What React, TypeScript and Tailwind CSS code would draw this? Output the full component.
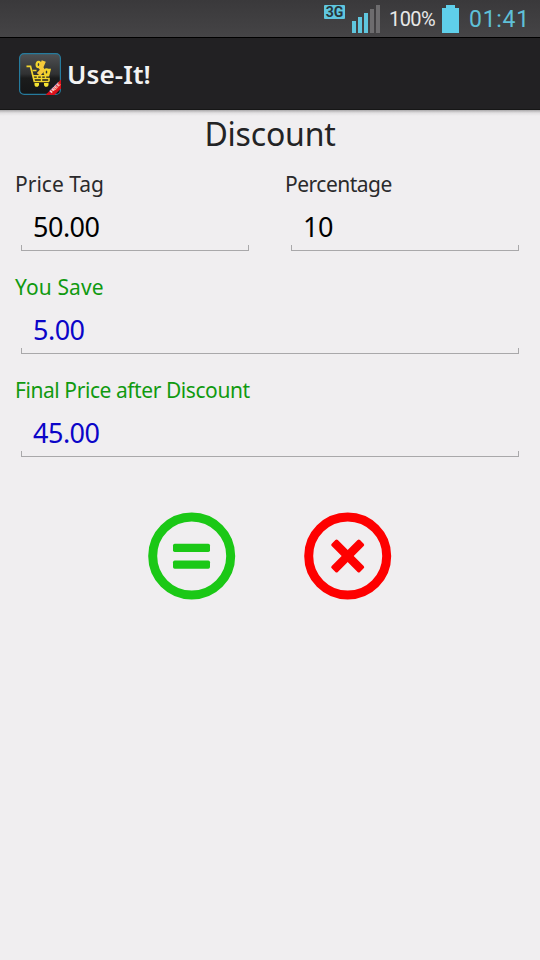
import React from "react";

type FieldProps = {
  label: string;
  value: string;
  labelClass?: string;
  valueClass?: string;
};

function Field({ label, value, labelClass = "", valueClass = "text-black" }: FieldProps) {
  return (
    <label className="flex h-[103px] w-full flex-col pl-[15px] pr-[21px]">
      <span className={`h-[37px] whitespace-pre text-[21px] leading-[28px] ${labelClass}`}>{label}</span>
      <span className={`ml-[6px] mt-[2px] block h-[42px] pl-[12px] text-[27px] leading-[36px] tracking-[-0.5px] ${valueClass}`}>
        {value}
      </span>
      <span className="-mt-[6px] ml-[6px] block h-[6px] border-x border-b border-[#a9a8aa]" />
    </label>
  );
}

function StatusBar() {
  return (
    <div className="flex h-[38px] items-start border-b border-black bg-linear-to-b from-[#3a393b] to-[#454446]">
      <svg className="ml-[324px] mt-[5px] h-[14px] w-[21px]" viewBox="0 0 21 14">
        <rect width="21" height="14" rx="1" fill="#5fc6de" />
        <text x="10.500" y="12" textAnchor="middle" fontFamily="Roboto, sans-serif" fontWeight="700" fontSize="14" fill="#27363b">3G</text>
      </svg>
      <svg className="ml-[7px] mt-[5px] h-[28px] w-[28px]" viewBox="0 0 28 28">
        <path d="M0 16h4v12H0zM6 12h4v16H6zM12 8h4v20h-4z" fill="#5fc6de" />
        <path d="M18 4h4v24h-4zM24 0h4v28h-4z" fill="#6d6c6e" />
      </svg>
      <span className="ml-[9px] mt-[6px] w-[53px] font-[Roboto,sans-serif] text-[20px] leading-[27px] tracking-[-0.6px] text-[#e8e8e8]">100%</span>
      <svg className="mt-[5px] h-[28px] w-[17px]" viewBox="0 0 17 28">
        <path d="M4 0h9v3h4v25H0V3h4z" fill="#5fcfea" />
      </svg>
      <span className="ml-[10px] mt-[5px] font-[Roboto,sans-serif] text-[23px] leading-[30px] tracking-[0.7px] text-[#5fc0d8]">01:41</span>
    </div>
  );
}

function AppIcon() {
  return (
    <svg className="h-[42px] w-[42px]" viewBox="0 0 42 42">
      <defs>
        <linearGradient id="gloss" x1="0" y1="0" x2="0" y2="1">
          <stop offset="0" stopColor="#505254" />
          <stop offset=".5" stopColor="#303132" />
          <stop offset=".6" stopColor="#1b1c1c" />
          <stop offset="1" stopColor="#151617" />
        </linearGradient>
        <clipPath id="tile">
          <rect width="42" height="42" rx="5" />
        </clipPath>
      </defs>
      <rect x=".6" y=".6" width="40.8" height="40.8" rx="4.5" fill="url(#gloss)" stroke="#267b9d" strokeWidth="1.2" />
      <g clipPath="url(#tile)">
        <path d="M26.500 42L42 26.500v9L35.500 42z" fill="#d9101c" />
        <text transform="translate(32.8 40.500) rotate(-45)" fontFamily="Liberation Sans, sans-serif" fontWeight="700" fontSize="4.800" fill="#fff">FREE</text>
      </g>
      <g fill="none" stroke="#f3d52d">
        <path d="M7.500 13.300h4l3.800 15.200H30" strokeWidth="1.700" />
        <path d="M13.500 17.500h4M14 22.700h15.500l1.500-6.200h-2M15 25.500h15v3" strokeWidth="1.600" />
        <path d="M18.500 22.500v3M22.500 22.500v6M26.500 22.500v3" strokeWidth="1.400" />
        <ellipse cx="19.500" cy="11.500" rx="1.900" ry="2.700" strokeWidth="2.200" />
        <ellipse cx="27.500" cy="19" rx="1.900" ry="2.700" strokeWidth="2.200" />
        <path d="M24.800 8L22 14.500L23.500 17L19.500 21.500" strokeWidth="4.400" stroke="#f6c93a" />
      </g>
      <path d="M15.500 30h4.500v2.200l-1.200 1.500h-2.200l-1.100-1.500zM25 30h4.500v2.200l-1.200 1.500h-2.200l-1.100-1.500z" fill="#f5e431" />
    </svg>
  );
}

export default function App() {
  return (
    <div className="flex h-[960px] w-[540px] flex-col overflow-hidden bg-[#f0eef0] font-['Noto_Sans',sans-serif]">
      <StatusBar />
      <header className="flex h-[72px] shrink-0 items-center border-b border-[#161616] bg-[#222123] pl-[19px]">
        <AppIcon />
        <h1 className="ml-[6px] text-[26px] font-semibold leading-[36px] tracking-[0.1px] text-[#f3f3f3]">Use-It!</h1>
      </header>
      <div className="h-[6px] shrink-0 bg-linear-to-b from-[#aaa8aa] via-[#e2e0e2] to-[#f0eef0]" />
      <main className="flex flex-col">
        <h2 className="h-[54px] text-center text-[32px] leading-[35px] tracking-[-0.2px] text-[#232325]">Discount</h2>
        <div className="grid grid-cols-2">
          <Field label="Price Tag" value="50.00" labelClass="text-[#2a2a2c]" />
          <Field label="Percentage" value="10" labelClass="text-[#2a2a2c] tracking-[-0.5px]" />
        </div>
        <Field label="You Save" value="5.00" labelClass="text-[#109a10] tracking-[0.1px]" valueClass="text-[#0b05c8]" />
        <Field label="Final Price after Discount" value="45.00" labelClass="text-[#109a10] tracking-[-0.43px]" valueClass="text-[#0b05c8]" />
        <div className="flex gap-[68px] pl-[148px] pt-[33px]">
          <button aria-label="Calculate">
            <svg className="h-[88px] w-[88px]" viewBox="0 0 88 88">
              <circle cx="43.700" cy="44" r="39" fill="none" stroke="#1bc816" strokeWidth="9" />
              <rect x="25" y="31.700" width="37" height="8.300" rx="1.700" fill="#1bc816" />
              <rect x="25" y="48.500" width="37" height="8.300" rx="1.700" fill="#1bc816" />
            </svg>
          </button>
          <button aria-label="Clear">
            <svg className="h-[88px] w-[88px]" viewBox="0 0 88 88">
              <circle cx="43.700" cy="44" r="39" fill="none" stroke="#fe0000" strokeWidth="9" />
              <g fill="#fe0000" transform="translate(43.700 44) rotate(45)">
                <rect x="-20" y="-4.300" width="40" height="8.600" rx="1.700" />
                <rect x="-4.300" y="-20" width="8.600" height="40" rx="1.700" />
              </g>
            </svg>
          </button>
        </div>
      </main>
    </div>
  );
}
